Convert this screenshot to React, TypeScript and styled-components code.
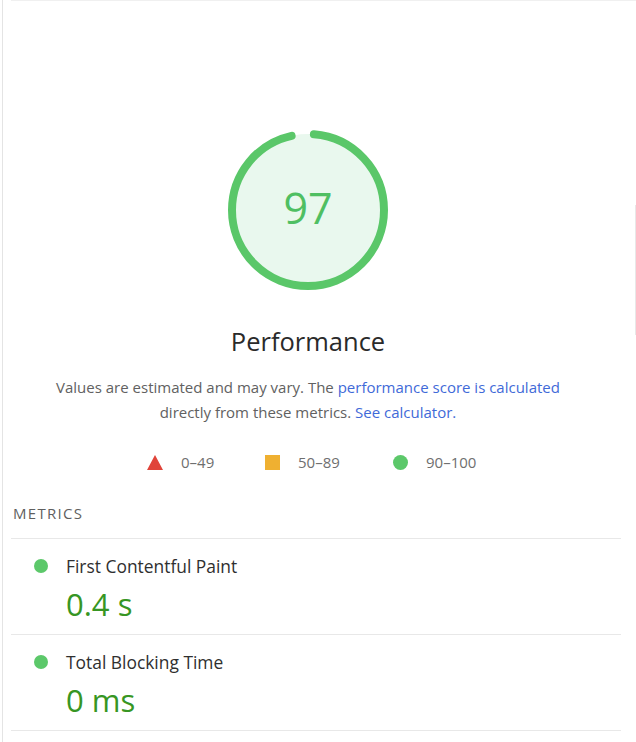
import React from "react";
import styled, { createGlobalStyle } from "styled-components";

const GlobalStyle = createGlobalStyle`
  html, body {
    margin: 0;
    padding: 0;
    background: #ffffff;
  }
  body {
    font-family: "Open Sans", "Noto Sans", Arial, sans-serif;
    -webkit-font-smoothing: antialiased;
  }
`;

const Frame = styled.div`
  position: relative;
  width: 636px;
  height: 742px;
  overflow: hidden;
  background: #fff;
`;

const Pane = styled.div`
  margin-left: 2px;
  height: 742px;
  border-left: 1px solid #e4e4e4;
  display: flex;
  flex-direction: column;
`;

const TopRule = styled.div`
  margin-left: 8px;
  height: 1px;
  background: #f0f0f0;
`;

const EdgeLine = styled.div`
  position: absolute;
  right: 0;
  top: 205px;
  width: 1px;
  height: 130px;
  background: #e8e8e8;
`;

const Summary = styled.section`
  width: 610px;
  display: flex;
  flex-direction: column;
  align-items: center;
  padding-top: 129px;
`;

const Gauge = styled.div`
  position: relative;
  width: 160px;
  height: 160px;
`;

const GaugeValue = styled.div`
  position: absolute;
  inset: 0;
  display: flex;
  align-items: center;
  justify-content: center;
  font-size: 43px;
  color: #4fbf62;
  padding-bottom: 6px;
  box-sizing: border-box;
`;

const Title = styled.h2`
  margin: 35px 0 0;
  font-size: 25.5px;
  line-height: 32px;
  font-weight: 400;
  color: #2a2a2a;
`;

const Description = styled.p`
  margin: 18px 0 0;
  font-size: 15px;
  line-height: 25px;
  color: #616161;
  text-align: center;
  width: 540px;
`;

const Link = styled.a`
  color: #3f6ad8;
  text-decoration: none;
`;

const Legend = styled.div`
  margin-top: 27px;
  padding-left: 8px;
  display: flex;
  align-items: center;
  font-size: 15px;
  line-height: 20px;
  color: #6f6f6f;
`;

const LegendItem = styled.div<{ $width: number }>`
  display: flex;
  align-items: center;
  gap: 18px;
  width: ${(p) => p.$width}px;
`;

const Triangle = styled.span`
  width: 0;
  height: 0;
  border-left: 8px solid transparent;
  border-right: 8px solid transparent;
  border-bottom: 15px solid #e0443a;
`;

const Square = styled.span`
  width: 15px;
  height: 15px;
  background: #efb031;
`;

const Dot = styled.span<{ $size?: number }>`
  width: ${(p) => p.$size ?? 15}px;
  height: ${(p) => p.$size ?? 15}px;
  border-radius: 50%;
  background: #5cc86a;
  flex: none;
`;

const Metrics = styled.section`
  margin-top: 31px;
  padding: 0 15px 0 8px;
`;

const MetricsHeader = styled.div`
  padding-left: 2px;
  font-size: 15px;
  line-height: 20px;
  letter-spacing: 1.3px;
  font-weight: 500;
  color: #5f5f5f;
  text-transform: uppercase;
  padding-bottom: 15px;
  border-bottom: 1px solid #e8e8e8;
`;

const MetricRow = styled.div`
  display: grid;
  grid-template-columns: 32px 1fr;
  padding: 15px 0 0 23px;
  height: 96px;
  box-sizing: border-box;
  border-bottom: 1px solid #e8e8e8;
`;

const DotCell = styled.div`
  height: 24px;
  display: flex;
  align-items: center;
`;

const MetricLabel = styled.div`
  font-size: 17.4px;
  line-height: 24px;
  color: #2f2f2f;
`;

const MetricValue = styled.div`
  grid-column: 2;
  font-size: 31px;
  line-height: 40px;
  margin-top: -4px;
  color: #379623;
`;

const R = 76;
const C = 2 * Math.PI * R;

function ScoreGauge({ score }: { score: number }) {
  // the arc starts just past twelve o'clock and leaves a small notch before it
  const arc = (score / 100) * C - 9;
  return (
    <Gauge>
      <svg width="160" height="160" viewBox="0 0 160 160">
        <circle cx="80" cy="80" r={R} fill="#e9f8ee" />
        <circle
          cx="80"
          cy="80"
          r={R}
          fill="none"
          stroke="#5ac769"
          strokeWidth="8"
          strokeLinecap="round"
          strokeDasharray={`${arc} ${C}`}
          strokeDashoffset={-6}
          transform="rotate(-90 80 80)"
        />
      </svg>
      <GaugeValue>{score}</GaugeValue>
    </Gauge>
  );
}

const metrics = [
  { label: "First Contentful Paint", value: "0.4 s" },
  { label: "Total Blocking Time", value: "0 ms" },
];

export default function App() {
  return (
    <>
      <GlobalStyle />
      <Frame>
        <Pane>
          <TopRule />
          <Summary>
            <ScoreGauge score={97} />
            <Title>Performance</Title>
            <Description>
              Values are estimated and may vary. The{" "}
              <Link href="#">performance score is calculated</Link> directly from these
              metrics. <Link href="#">See calculator.</Link>
            </Description>
            <Legend>
              <LegendItem $width={118}>
                <Triangle />
                <span>0–49</span>
              </LegendItem>
              <LegendItem $width={128}>
                <Square />
                <span>50–89</span>
              </LegendItem>
              <LegendItem $width={84}>
                <Dot />
                <span>90–100</span>
              </LegendItem>
            </Legend>
          </Summary>
          <Metrics>
            <MetricsHeader>Metrics</MetricsHeader>
            {metrics.map((m) => (
              <MetricRow key={m.label}>
                <DotCell>
                  <Dot $size={14} />
                </DotCell>
                <MetricLabel>{m.label}</MetricLabel>
                <MetricValue>{m.value}</MetricValue>
              </MetricRow>
            ))}
          </Metrics>
        </Pane>
        <EdgeLine />
      </Frame>
    </>
  );
}
